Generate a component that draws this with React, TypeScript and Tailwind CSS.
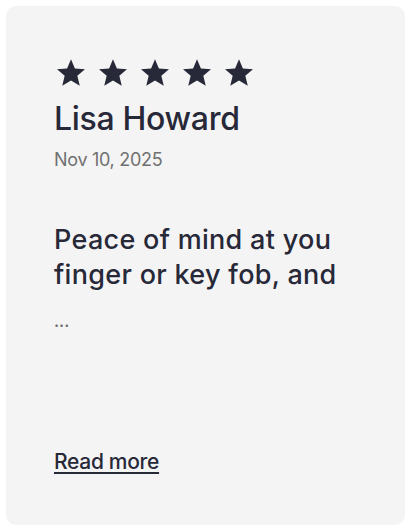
const Star = () => (
  <svg width="28" height="27" viewBox="1.6 1.5 20.8 19.8" fill="currentColor">
    <polygon points="12,1.5 14.9,8.4 22.4,9 16.7,13.9 18.5,21.3 12,17.3 5.5,21.3 7.3,13.9 1.6,9 9.1,8.4" />
  </svg>
);

export default function App() {
  return (
    <div className="min-h-[531px] w-[411px] bg-white p-[6px]" style={{ fontFamily: 'Inter, "Liberation Sans", sans-serif' }}>
      <div className="flex h-[519px] w-[399px] flex-col rounded-[10px] bg-[#f4f4f4] px-12 pt-[53px] text-[#272838]">
        {/* Rating */}
        <div className="ml-[3px] flex gap-[14px]">
          {[0, 1, 2, 3, 4].map((i) => (
            <Star key={i} />
          ))}
        </div>
        <h2 className="mt-[13px] text-[32px] leading-[40px] font-medium tracking-[-0.3px]">Lisa Howard</h2>
        <div className="mt-[9px] text-[18px] leading-[24px] text-[#707070] tracking-[-0.3px]">Nov 10, 2025</div>

        <p className="mt-[50px] text-[27px] leading-[35px] font-medium tracking-[0.3px]">
          Peace of mind at you
          <br />
          finger or key fob, and
        </p>
        <div className="mt-[19px] text-[16px] leading-[20px] font-semibold text-[#707070]">...</div>

        <a href="#" className="mt-auto mb-[50px] self-start text-[21px] leading-[26px] font-medium underline underline-offset-[3px] tracking-[-0.3px]">
          Read more
        </a>
      </div>
    </div>
  );
}
